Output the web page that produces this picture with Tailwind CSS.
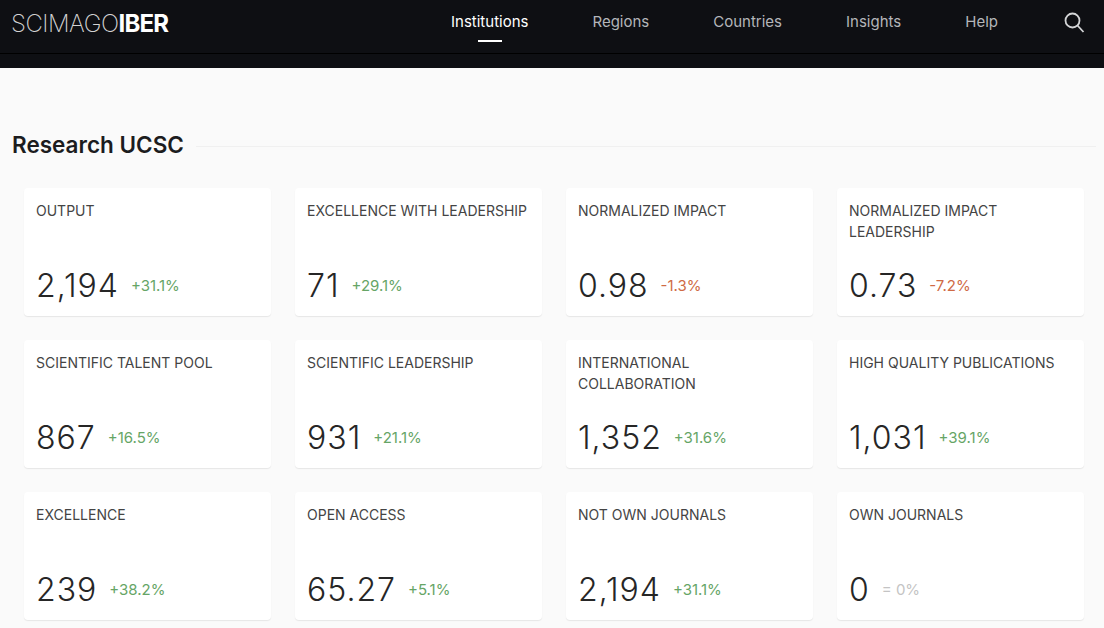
<!DOCTYPE html>
<html lang="en">
<head>
    <meta charset="UTF-8">
    <title>Research UCSC</title>
    <script src="https://cdn.jsdelivr.net/npm/@tailwindcss/browser@4"></script>
</head>
<body class="h-[628px] overflow-hidden bg-[#fafafa] font-['Inter',sans-serif]">
    <header class="h-[68px] bg-[#0e0f13]">
        <div class="h-[54px] border-b border-black flex items-center pl-[11px] pr-[19px]">
            <a href="#" class="text-[24px] leading-none tracking-[-0.5px] text-[#d2d2d2] font-[150] mb-[8px] mt-[2px] w-[159px] whitespace-nowrap">SCIMAGO<span class="font-bold text-white tracking-[-0.8px]">IBER</span></a>
            <nav class="flex items-center text-[15px] text-[#b4b6ba] ml-[281px] mb-[8px]">
                <a href="#" class="relative text-white">Institutions<span class="absolute left-[27px] top-[29px] w-[24px] h-[2px] bg-white"></span></a>
                <a href="#" class="ml-[64px]">Regions</a>
                <a href="#" class="ml-[64px]">Countries</a>
                <a href="#" class="ml-[64px]">Insights</a>
                <a href="#" class="ml-[64px]">Help</a>
            </nav>
            <svg class="ml-auto mb-[9px]" width="22" height="22" viewBox="0 0 22 22" fill="none" stroke="#d4d5d7" stroke-width="1.8"><circle cx="9.5" cy="9.5" r="7"/><path d="M14.5 14.5l6 6.5"/></svg>
        </div>
    </header>
    <main class="pt-[62px] pl-[12px] pr-[8px]">
        <div class="flex items-center gap-[12px]">
            <h1 class="text-[22.5px] leading-[30px] font-semibold text-[#1c1c1e] whitespace-nowrap">Research UCSC</h1>
            <div class="h-px flex-1 bg-[#f0f0f0] mt-[2px]"></div>
        </div>
        <div class="grid grid-cols-4 gap-[24px] pl-[12px] pr-[12px] mt-[28px]">
            <div class="h-[128px] bg-white rounded-[4px] shadow-[0_1px_1px_#e6e6e6] px-[12px] pt-[12px] flex flex-col">
                <h2 class="text-[14px] leading-[21px] text-[#444]">OUTPUT</h2>
                <p class="mt-auto mb-[9px] flex items-center gap-[12px]"><span class="text-[32px] leading-[42px] font-light tracking-[1px] text-[#262626]">2,194</span><span class="text-[15px] text-[#66a566]">+31.1%</span></p>
            </div>
            <div class="h-[128px] bg-white rounded-[4px] shadow-[0_1px_1px_#e6e6e6] px-[12px] pt-[12px] flex flex-col">
                <h2 class="text-[14px] leading-[21px] text-[#444]">EXCELLENCE WITH LEADERSHIP</h2>
                <p class="mt-auto mb-[9px] flex items-center gap-[12px]"><span class="text-[32px] leading-[42px] font-light tracking-[1px] text-[#262626]">71</span><span class="text-[15px] text-[#66a566]">+29.1%</span></p>
            </div>
            <div class="h-[128px] bg-white rounded-[4px] shadow-[0_1px_1px_#e6e6e6] px-[12px] pt-[12px] flex flex-col">
                <h2 class="text-[14px] leading-[21px] text-[#444]">NORMALIZED IMPACT</h2>
                <p class="mt-auto mb-[9px] flex items-center gap-[12px]"><span class="text-[32px] leading-[42px] font-light tracking-[1px] text-[#262626]">0.98</span><span class="text-[15px] text-[#cf6a45]">-1.3%</span></p>
            </div>
            <div class="h-[128px] bg-white rounded-[4px] shadow-[0_1px_1px_#e6e6e6] px-[12px] pt-[12px] flex flex-col">
                <h2 class="text-[14px] leading-[21px] text-[#444]">NORMALIZED IMPACT LEADERSHIP</h2>
                <p class="mt-auto mb-[9px] flex items-center gap-[12px]"><span class="text-[32px] leading-[42px] font-light tracking-[1px] text-[#262626]">0.73</span><span class="text-[15px] text-[#cf6a45]">-7.2%</span></p>
            </div>
            <div class="h-[128px] bg-white rounded-[4px] shadow-[0_1px_1px_#e6e6e6] px-[12px] pt-[12px] flex flex-col">
                <h2 class="text-[14px] leading-[21px] text-[#444]">SCIENTIFIC TALENT POOL</h2>
                <p class="mt-auto mb-[9px] flex items-center gap-[12px]"><span class="text-[32px] leading-[42px] font-light tracking-[1px] text-[#262626]">867</span><span class="text-[15px] text-[#66a566]">+16.5%</span></p>
            </div>
            <div class="h-[128px] bg-white rounded-[4px] shadow-[0_1px_1px_#e6e6e6] px-[12px] pt-[12px] flex flex-col">
                <h2 class="text-[14px] leading-[21px] text-[#444]">SCIENTIFIC LEADERSHIP</h2>
                <p class="mt-auto mb-[9px] flex items-center gap-[12px]"><span class="text-[32px] leading-[42px] font-light tracking-[1px] text-[#262626]">931</span><span class="text-[15px] text-[#66a566]">+21.1%</span></p>
            </div>
            <div class="h-[128px] bg-white rounded-[4px] shadow-[0_1px_1px_#e6e6e6] px-[12px] pt-[12px] flex flex-col">
                <h2 class="text-[14px] leading-[21px] text-[#444]">INTERNATIONAL COLLABORATION</h2>
                <p class="mt-auto mb-[9px] flex items-center gap-[12px]"><span class="text-[32px] leading-[42px] font-light tracking-[1px] text-[#262626]">1,352</span><span class="text-[15px] text-[#66a566]">+31.6%</span></p>
            </div>
            <div class="h-[128px] bg-white rounded-[4px] shadow-[0_1px_1px_#e6e6e6] px-[12px] pt-[12px] flex flex-col">
                <h2 class="text-[14px] leading-[21px] text-[#444]">HIGH QUALITY PUBLICATIONS</h2>
                <p class="mt-auto mb-[9px] flex items-center gap-[12px]"><span class="text-[32px] leading-[42px] font-light tracking-[1px] text-[#262626]">1,031</span><span class="text-[15px] text-[#66a566]">+39.1%</span></p>
            </div>
            <div class="h-[128px] bg-white rounded-[4px] shadow-[0_1px_1px_#e6e6e6] px-[12px] pt-[12px] flex flex-col">
                <h2 class="text-[14px] leading-[21px] text-[#444]">EXCELLENCE</h2>
                <p class="mt-auto mb-[9px] flex items-center gap-[12px]"><span class="text-[32px] leading-[42px] font-light tracking-[1px] text-[#262626]">239</span><span class="text-[15px] text-[#66a566]">+38.2%</span></p>
            </div>
            <div class="h-[128px] bg-white rounded-[4px] shadow-[0_1px_1px_#e6e6e6] px-[12px] pt-[12px] flex flex-col">
                <h2 class="text-[14px] leading-[21px] text-[#444]">OPEN ACCESS</h2>
                <p class="mt-auto mb-[9px] flex items-center gap-[12px]"><span class="text-[32px] leading-[42px] font-light tracking-[1px] text-[#262626]">65.27</span><span class="text-[15px] text-[#66a566]">+5.1%</span></p>
            </div>
            <div class="h-[128px] bg-white rounded-[4px] shadow-[0_1px_1px_#e6e6e6] px-[12px] pt-[12px] flex flex-col">
                <h2 class="text-[14px] leading-[21px] text-[#444]">NOT OWN JOURNALS</h2>
                <p class="mt-auto mb-[9px] flex items-center gap-[12px]"><span class="text-[32px] leading-[42px] font-light tracking-[1px] text-[#262626]">2,194</span><span class="text-[15px] text-[#66a566]">+31.1%</span></p>
            </div>
            <div class="h-[128px] bg-white rounded-[4px] shadow-[0_1px_1px_#e6e6e6] px-[12px] pt-[12px] flex flex-col">
                <h2 class="text-[14px] leading-[21px] text-[#444]">OWN JOURNALS</h2>
                <p class="mt-auto mb-[9px] flex items-center gap-[12px]"><span class="text-[32px] leading-[42px] font-light tracking-[1px] text-[#262626]">0</span><span class="text-[15px] text-[#c4c4c4]">= 0%</span></p>
            </div>
        </div>
    </main>
</body>
</html>
